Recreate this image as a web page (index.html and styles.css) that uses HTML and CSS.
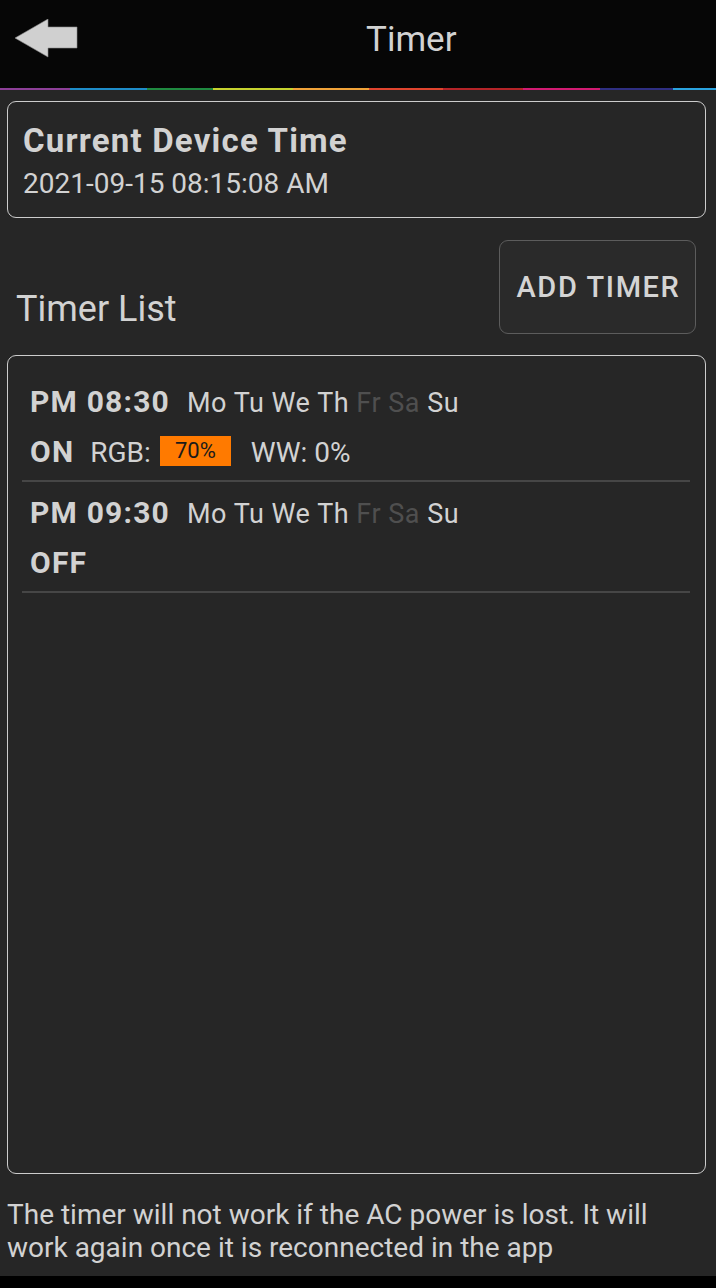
FILE: index.html
```html
<!DOCTYPE html>
<html>
<head>
<meta charset="utf-8">
<link rel="stylesheet" href="styles.css">
</head>
<body>
<div class="app">
  <header class="topbar">
    <svg class="back" width="64" height="40" viewBox="0 0 64 40">
      <polygon points="0,19 33,0 33,8 62,8 62,29 33,29 33,38" fill="#d0d0d0" stroke="#8a8a8a" stroke-width="0.6"/>
    </svg>
    <div class="title">Timer</div>
  </header>
  <div class="rainbow">
    <span class="c1"></span><span class="c2"></span><span class="c3"></span><span class="c4"></span><span class="c5"></span><span class="c6"></span><span class="c7"></span><span class="c8"></span><span class="c9"></span><span class="c10"></span>
  </div>
  <main class="content">
    <section class="card device">
      <div class="device-title">Current Device Time</div>
      <div class="device-time">2021-09-15 08:15:08 AM</div>
    </section>
    <div class="list-head">
      <div class="list-label">Timer List</div>
      <button class="add-btn">ADD TIMER</button>
    </div>
    <section class="card list">
      <div class="timer">
        <div class="line">
          <span class="time">PM 08:30</span><span class="days"><span>Mo</span> <span>Tu</span> <span>We</span> <span>Th</span> <span class="off">Fr</span> <span class="off">Sa</span> <span>Su</span></span>
        </div>
        <div class="line">
          <span class="state">ON</span><span class="lbl">RGB:</span><span class="pct">70%</span><span class="lbl">WW: 0%</span>
        </div>
      </div>
      <div class="timer">
        <div class="line">
          <span class="time">PM 09:30</span><span class="days"><span>Mo</span> <span>Tu</span> <span>We</span> <span>Th</span> <span class="off">Fr</span> <span class="off">Sa</span> <span>Su</span></span>
        </div>
        <div class="line">
          <span class="state">OFF</span>
        </div>
      </div>
    </section>
    <p class="note">The timer will not work if the AC power is lost. It will<br>work again once it is reconnected in the app</p>
  </main>
  <div class="navbar"></div>
</div>
</body>
</html>
```

FILE: styles.css
```css
* { box-sizing: border-box; }
html, body { margin: 0; padding: 0; background: #262626; }
body { font-family: Roboto, "Noto Sans", sans-serif; color: #d2d2d2; }
.app { width: 716px; height: 1288px; display: flex; flex-direction: column; overflow: hidden; }
.topbar { height: 88px; background: #060606; position: relative; display: flex; align-items: center; }
.back { margin-left: 15px; margin-top: -10px; }
.title { position: absolute; left: 366px; top: 19px; font-size: 35px; line-height: normal; color: #d2d2d2; }
.rainbow { height: 2px; display: flex; }
.rainbow span { display: block; height: 2px; }
.c1 { width: 70px; background: #8d3f98; }
.c2 { width: 77px; background: #1e8cc8; }
.c3 { width: 66px; background: #1f8a40; }
.c4 { width: 80px; background: #c6d22e; }
.c5 { width: 76px; background: #f0a238; }
.c6 { width: 74px; background: #e0442e; }
.c7 { width: 80px; background: #b52428; }
.c8 { width: 77px; background: #d21b72; }
.c9 { width: 73px; background: #2f2f82; }
.c10 { width: 43px; background: #2aa3df; }
.content { flex: 1; display: flex; flex-direction: column; padding: 11px 10px 0 7px; }
.card { border: 1.5px solid #cccccc; border-radius: 9px; }
.device { height: 117px; padding: 19px 15px 0; }
.device-title { font-size: 33px; font-weight: 700; line-height: 40px; letter-spacing: 1.2px; }
.device-time { font-size: 28px; line-height: 42px; margin-top: 2px; }
.list-head { height: 137px; display: flex; justify-content: space-between; align-items: flex-start; }
.list-label { font-size: 36px; line-height: 42px; margin-top: 70px; margin-left: 9px; }
.add-btn { margin-top: 22px; margin-right: 10px; width: 197px; height: 94px; background: #2a2a2a; border: 1.5px solid #5c5c5c; border-radius: 9px; color: #d4d4d4; font-family: Roboto, sans-serif; font-size: 29px; font-weight: 500; letter-spacing: 1.6px; padding: 0 0 0 2px; }
.list { flex: 1; padding: 15px 15px 0 14px; }
.timer { border-bottom: 2px solid #464646; padding: 6px 0 3px 8px; }
.line { font-size: 30px; line-height: 50px; height: 50px; white-space: nowrap; }
.line > span { line-height: 1; }
.time { font-size: 30px; font-weight: 700; letter-spacing: 1.2px; margin-right: 17px; }
.days { font-size: 27px; letter-spacing: 0.5px; }
.days .off { color: #4f4f4f; }
.state { font-size: 30px; font-weight: 700; letter-spacing: 1.2px; margin-right: 16px; }
.lbl { font-size: 28px; }
.pct { display: inline-block; background: #ff7a00; color: #1a1a1a; font-size: 22px; width: 71px; height: 30px; line-height: 30px !important; text-align: center; margin-left: 9px; margin-right: 20px; vertical-align: 4px; }
.note { margin: 0; height: 102px; padding-top: 24px; font-size: 28px; line-height: 33px; white-space: nowrap; }
.navbar { height: 12px; background: #000; }
```
